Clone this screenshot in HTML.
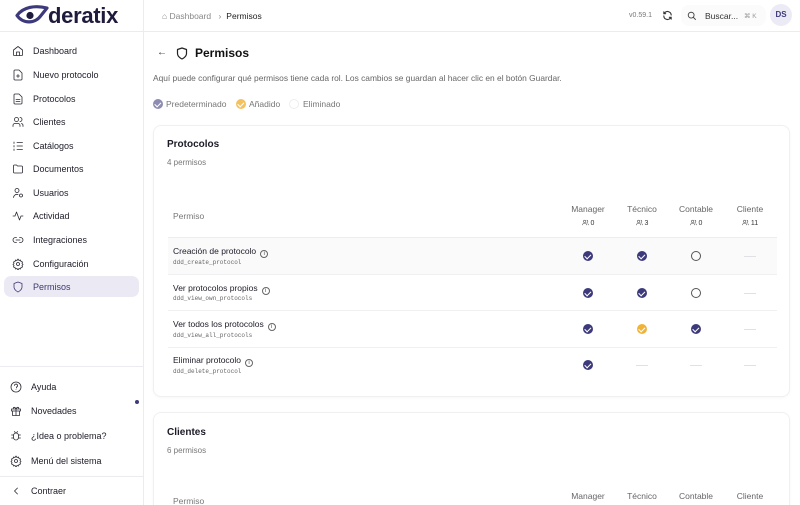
<!DOCTYPE html>
<html><head><meta charset="utf-8"><style>
*{box-sizing:border-box;margin:0;padding:0}
html,body{width:800px;height:505px;overflow:hidden}
body{background:#fff;font-family:"Liberation Sans",sans-serif;color:#1c1c28;position:relative}
.abs{position:absolute}
.side{position:absolute;left:0;top:0;width:144px;height:505px;border-right:1px solid #ececf0;background:#fff}
.nav{position:absolute;left:4px;width:135px;height:21px;border-radius:7px;font-size:9px;display:flex;align-items:center;padding-left:8px;color:#1c1c28}
.nav svg{width:12px;height:12px;margin-right:9px;fill:none;stroke:#2a2a35;stroke-width:1.6;stroke-linecap:round;stroke-linejoin:round}
.act{background:#ebeaf4;color:#3b3770}
.act svg{stroke:#3b3770}
.card{position:absolute;left:153px;width:637px;border:1px solid #f0f0f3;border-radius:8px;background:#fff;box-shadow:0 1px 3px rgba(0,0,0,.03)}
.ck{position:absolute;width:10px;height:10px;border-radius:50%;background:#3d3a7c}
.ck:after{content:"";position:absolute;left:3px;top:2.2px;width:3px;height:4.5px;border:solid #fff;border-width:0 1.4px 1.4px 0;transform:rotate(45deg)}
.ck.y{background:#f0b338}
.em{position:absolute;width:10px;height:10px;border-radius:50%;border:1px solid #555}
.ds{position:absolute;width:12px;height:1px;background:#e0e0e5}
.ch{position:absolute;font-size:8.5px;color:#666;text-align:center;width:54px}
.bd{position:absolute;font-size:7px;color:#333;text-align:center;width:54px}
.bd svg{width:7px;height:7px;vertical-align:-1px;margin-right:2px;fill:none;stroke:#555;stroke-width:2}
.rn{position:absolute;left:173px;font-size:8.5px;color:#1c1c28}
.rc{position:absolute;left:173px;font-family:"Liberation Mono",monospace;font-size:6px;color:#666}
.info{display:inline-block;width:8px;height:8px;border:1px solid #666;border-radius:50%;vertical-align:-1px;margin-left:4px;font-size:5px;text-align:center;line-height:6px}
</style></head><body>
<svg width="0" height="0" style="position:absolute"><defs><symbol id="pp" viewBox="0 0 24 24"><circle cx="9" cy="8" r="4"/><path d="M2 21v-1a5 5 0 0 1 5-5h4a5 5 0 0 1 5 5v1M16 4a4 4 0 0 1 0 8M22 21v-1a5 5 0 0 0-3-4"/></symbol></defs></svg>
<div class="side">
<svg class="abs" style="left:15px;top:5px" width="34" height="21" viewBox="0 0 34 21"><path d="M2 10.5 C8 2,20 0,32 3 L26 10.5 C20 19,8 19,2 10.5Z" fill="none" stroke="#3d3a7c" stroke-width="3.2" stroke-linejoin="round"/><circle cx="15" cy="10.5" r="3.6" fill="#1e1b3d"/></svg>
<div class="abs" style="left:48px;top:5px;font-size:22px;line-height:22px;font-weight:bold;color:#1e1b3d;letter-spacing:-0.3px">deratix</div>
<div class="abs" style="left:0;top:31px;width:144px;height:1px;background:#ececf0"></div>
<div class="nav" style="top:40px"><svg viewBox="0 0 24 24"><path d="M3 10l9-7 9 7v10a1 1 0 0 1-1 1H4a1 1 0 0 1-1-1z"/><path d="M9 21v-7h6v7"/></svg>Dashboard</div>
<div class="nav" style="top:64px"><svg viewBox="0 0 24 24"><path d="M14 2H6a2 2 0 0 0-2 2v16a2 2 0 0 0 2 2h12a2 2 0 0 0 2-2V8z"/><path d="M12 11v6M9 14h6"/></svg>Nuevo protocolo</div>
<div class="nav" style="top:88px"><svg viewBox="0 0 24 24"><path d="M14 2H6a2 2 0 0 0-2 2v16a2 2 0 0 0 2 2h12a2 2 0 0 0 2-2V8z"/><path d="M8 13h8M8 17h8"/></svg>Protocolos</div>
<div class="nav" style="top:111px"><svg viewBox="0 0 24 24"><circle cx="9" cy="7" r="4"/><path d="M2 21v-2a4 4 0 0 1 4-4h6a4 4 0 0 1 4 4v2M16 3a4 4 0 0 1 0 8M22 21v-2a4 4 0 0 0-3-4"/></svg>Clientes</div>
<div class="nav" style="top:135px"><svg viewBox="0 0 24 24"><path d="M10 5h11M10 12h11M10 19h11M4 4v3M4 11v3M4 18v3"/></svg>Catálogos</div>
<div class="nav" style="top:158px"><svg viewBox="0 0 24 24"><path d="M3 6a2 2 0 0 1 2-2h4l2 2h8a2 2 0 0 1 2 2v10a2 2 0 0 1-2 2H5a2 2 0 0 1-2-2z"/></svg>Documentos</div>
<div class="nav" style="top:182px"><svg viewBox="0 0 24 24"><circle cx="10" cy="7" r="4"/><path d="M3 21a7 7 0 0 1 9-6"/><circle cx="18" cy="17" r="3"/></svg>Usuarios</div>
<div class="nav" style="top:205px"><svg viewBox="0 0 24 24"><path d="M2 12h4l3-8 6 16 3-8h4"/></svg>Actividad</div>
<div class="nav" style="top:229px"><svg viewBox="0 0 24 24"><path d="M9 17H7a5 5 0 0 1 0-10h2M15 7h2a5 5 0 0 1 0 10h-2M8 12h8"/></svg>Integraciones</div>
<div class="nav" style="top:253px"><svg viewBox="0 0 24 24"><circle cx="12" cy="12" r="3"/><path d="M12 2l2 3 3-1 1 3 3 1-1 3 2 2-2 2 1 3-3 1-1 3-3-1-2 3-2-3-3 1-1-3-3-1 1-3-2-2 2-2-1-3 3-1 1-3 3 1z"/></svg>Configuración</div>
<div class="nav act" style="top:276px"><svg viewBox="0 0 24 24"><path d="M12 22s8-4 8-10V5l-8-3-8 3v7c0 6 8 10 8 10z"/></svg>Permisos</div>
<div class="abs" style="left:0;top:366px;width:144px;height:1px;background:#ececf0"></div>
<div class="nav" style="top:376px;left:2px"><svg viewBox="0 0 24 24"><circle cx="12" cy="12" r="10"/><path d="M9 9a3 3 0 1 1 4 3v2M12 17h.01"/></svg>Ayuda</div>
<div class="nav" style="top:400px;left:2px"><svg viewBox="0 0 24 24"><path d="M3 8h18v4H3zM5 12v9h14v-9M12 8v13M12 8c-2-5-7-4-5 0M12 8c2-5 7-4 5 0"/></svg>Novedades</div>
<div class="abs" style="left:135px;top:400px;width:4px;height:4px;border-radius:50%;background:#3d3a7c"></div>
<div class="nav" style="top:425px;left:2px"><svg viewBox="0 0 24 24"><rect x="7" y="6" width="10" height="14" rx="5"/><path d="M3 10h4M17 10h4M3 16h4M17 16h4M9 3l2 3M15 3l-2 3"/></svg>¿Idea o problema?</div>
<div class="nav" style="top:450px;left:2px"><svg viewBox="0 0 24 24"><circle cx="12" cy="12" r="3"/><path d="M12 2l2 3 3-1 1 3 3 1-1 3 2 2-2 2 1 3-3 1-1 3-3-1-2 3-2-3-3 1-1-3-3-1 1-3-2-2 2-2-1-3 3-1 1-3 3 1z"/></svg>Menú del sistema</div>
<div class="abs" style="left:0;top:476px;width:144px;height:1px;background:#ececf0"></div>
<div class="nav" style="top:480px;left:2px"><svg viewBox="0 0 24 24"><path d="M15 6l-6 6 6 6"/></svg>Contraer</div>
</div>
<div class="abs" style="left:144px;top:31px;width:656px;height:1px;background:#ececf0"></div>
<div class="abs" style="left:162px;top:11px;font-size:8.5px;color:#888">⌂ Dashboard <span style="margin:0 5px">›</span><span style="color:#222">Permisos</span></div>
<div class="abs" style="left:629px;top:12px;font-size:7px;color:#777">v0.59.1</div>
<svg class="abs" style="left:662px;top:10px" width="11" height="11" viewBox="0 0 24 24" fill="none" stroke="#333" stroke-width="2.4" stroke-linecap="round"><path d="M20 11a8 8 0 0 0-14-5l-2 2M4 4v4h4M4 13a8 8 0 0 0 14 5l2-2M20 20v-4h-4"/></svg>
<div class="abs" style="left:681px;top:5px;width:85px;height:21px;border-radius:8px;background:#fbfbfc"></div>
<svg class="abs" style="left:687px;top:11px" width="10" height="10" viewBox="0 0 24 24" fill="none" stroke="#444" stroke-width="2.2"><circle cx="10" cy="10" r="7"/><path d="M15 15l6 6"/></svg>
<div class="abs" style="left:705px;top:11px;font-size:8.5px;color:#333">Buscar...</div>
<div class="abs" style="left:744px;top:12px;font-size:6.5px;color:#999">⌘ K</div>
<div class="abs" style="left:770px;top:4px;width:22px;height:22px;border-radius:50%;background:#ecebf5;color:#3d3a7c;font-size:8px;font-weight:bold;text-align:center;line-height:22px">DS</div>
<div class="abs" style="left:157px;top:47px;font-size:10px;color:#333">←</div>
<svg class="abs" style="left:176px;top:47px" width="12" height="13" viewBox="0 0 24 26" fill="none" stroke="#222" stroke-width="2.4" stroke-linejoin="round"><path d="M12 24s9-4 9-11V5l-9-3-9 3v8c0 7 9 11 9 11z"/></svg>
<div class="abs" style="left:195px;top:46px;font-size:12px;font-weight:bold;color:#111">Permisos</div>
<div class="abs" style="left:153px;top:73px;font-size:8.4px;color:#666">Aquí puede configurar qué permisos tiene cada rol. Los cambios se guardan al hacer clic en el botón Guardar.</div>
<div class="ck" style="left:153px;top:99px;background:#8e8cb0"></div><div class="abs" style="left:166px;top:99px;font-size:8.5px;color:#777">Predeterminado</div>
<div class="ck y" style="left:236px;top:99px;background:#f3c25e"></div><div class="abs" style="left:249px;top:99px;font-size:8.5px;color:#777">Añadido</div>
<div class="em" style="left:289px;top:99px;border-color:#eee"></div><div class="abs" style="left:303px;top:99px;font-size:8.5px;color:#777">Eliminado</div>
<div class="card" style="top:125px;height:272px"></div>
<div class="abs" style="left:167px;top:139px;font-size:10px;font-weight:bold">Protocolos</div>
<div class="abs" style="left:167px;top:158px;font-size:8px;color:#777">4 permisos</div>
<div class="abs" style="left:173px;top:211px;font-size:8.5px;color:#777">Permiso</div>
<div class="ch" style="left:561px;top:204px">Manager</div><div class="ch" style="left:615px;top:204px">Técnico</div><div class="ch" style="left:669px;top:204px">Contable</div><div class="ch" style="left:723px;top:204px">Cliente</div>
<div class="bd" style="left:561px;top:219px"><svg><use href="#pp"/></svg>0</div><div class="bd" style="left:615px;top:219px"><svg><use href="#pp"/></svg>3</div><div class="bd" style="left:669px;top:219px"><svg><use href="#pp"/></svg>0</div><div class="bd" style="left:723px;top:219px"><svg><use href="#pp"/></svg>11</div>
<div class="abs" style="left:168px;top:237px;width:609px;height:1px;background:#ededf0"></div>
<div class="abs" style="left:168px;top:238px;width:609px;height:36px;background:#fafafa"></div>
<div class="abs" style="left:168px;top:274px;width:609px;height:1px;background:#f0f0f2"></div>
<div class="abs" style="left:168px;top:310px;width:609px;height:1px;background:#f0f0f2"></div>
<div class="abs" style="left:168px;top:347px;width:609px;height:1px;background:#f0f0f2"></div>
<div class="rn" style="top:246px">Creación de protocolo<span class="info">i</span></div><div class="rc" style="top:259px">ddd_create_protocol</div>
<div class="rn" style="top:283px">Ver protocolos propios<span class="info">i</span></div><div class="rc" style="top:295px">ddd_view_own_protocols</div>
<div class="rn" style="top:319px">Ver todos los protocolos<span class="info">i</span></div><div class="rc" style="top:332px">ddd_view_all_protocols</div>
<div class="rn" style="top:355px">Eliminar protocolo<span class="info">i</span></div><div class="rc" style="top:368px">ddd_delete_protocol</div>
<div class="ck" style="left:583px;top:251px"></div><div class="ck" style="left:637px;top:251px"></div><div class="em" style="left:691px;top:251px"></div><div class="ds" style="left:744px;top:256px"></div>
<div class="ck" style="left:583px;top:288px"></div><div class="ck" style="left:637px;top:288px"></div><div class="em" style="left:691px;top:288px"></div><div class="ds" style="left:744px;top:293px"></div>
<div class="ck" style="left:583px;top:324px"></div><div class="ck y" style="left:637px;top:324px"></div><div class="ck" style="left:691px;top:324px"></div><div class="ds" style="left:744px;top:329px"></div>
<div class="ck" style="left:583px;top:360px"></div><div class="ds" style="left:636px;top:365px"></div><div class="ds" style="left:690px;top:365px"></div><div class="ds" style="left:744px;top:365px"></div>
<div class="card" style="top:412px;height:93px;border-bottom:none;border-radius:8px 8px 0 0"></div>
<div class="abs" style="left:167px;top:427px;font-size:10px;font-weight:bold">Clientes</div>
<div class="abs" style="left:167px;top:446px;font-size:8px;color:#777">6 permisos</div>
<div class="abs" style="left:173px;top:497px;font-size:8.5px;line-height:8px;height:8px;overflow:hidden;color:#777">Permiso</div>
<div class="ch" style="left:561px;top:491px">Manager</div><div class="ch" style="left:615px;top:491px">Técnico</div><div class="ch" style="left:669px;top:491px">Contable</div><div class="ch" style="left:723px;top:491px">Cliente</div>
</body></html>
